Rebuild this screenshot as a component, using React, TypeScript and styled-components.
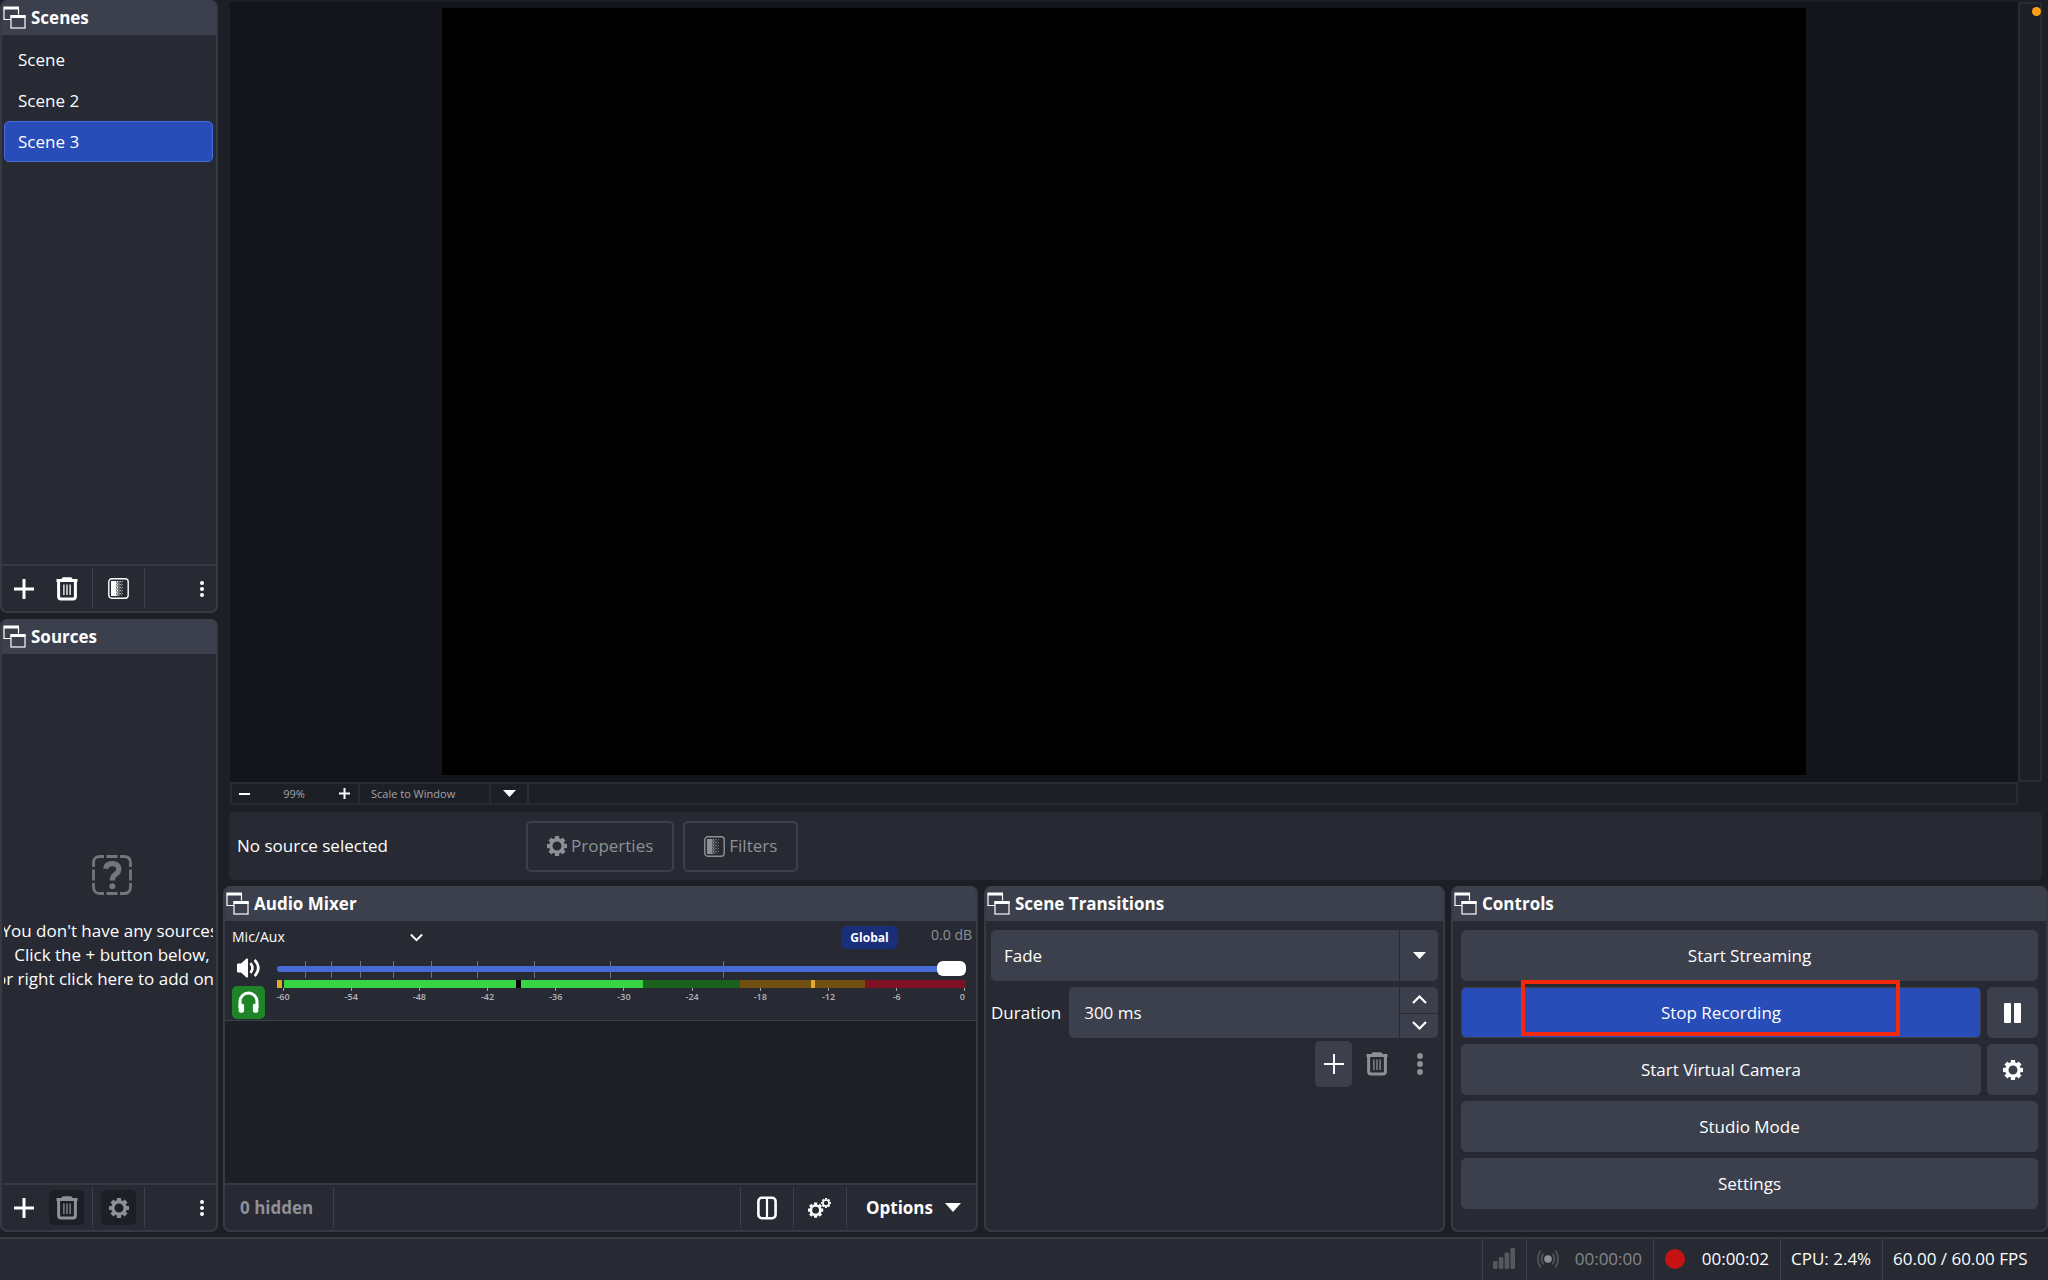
import React, { useState } from "react";
import styled, { createGlobalStyle, css } from "styled-components";

const c = {
  window: "#1d1f26",
  panel: "#272a33",
  raised: "#3c404c",
  line: "#363a45",
  faint: "#282b33",
  preview: "#14141c",
  primary: "#284cb8",
  text: "#fefefe",
  muted: "#8f9095",
};

const Global = createGlobalStyle`
  * { box-sizing: border-box; }
  body { margin: 0; background: ${c.window}; }
  body, button, input, select {
    font-family: "Open Sans", "Noto Sans", sans-serif;
    font-size: 17px;
    line-height: 24px;
    color: ${c.text};
  }
  button { border: 0; padding: 0; background: none; cursor: pointer; }
  svg { display: block; flex: none; }
`;

const Shell = styled.div`
  height: 100vh;
  min-height: 900px;
  display: flex;
  flex-direction: column;
  gap: 5px;
`;
const Workspace = styled.div`
  flex: 1;
  min-height: 0;
  display: grid;
  grid-template-columns: 218px minmax(0, 1fr);
  gap: 5px;
`;
const Side = styled.aside`
  display: grid;
  grid-template-rows: 1fr 1fr;
  gap: 6px;
  min-height: 0;
`;
const Main = styled.main`
  display: flex;
  flex-direction: column;
  min-height: 0;
`;

/* Docks */
const DockBox = styled.section`
  display: flex;
  flex-direction: column;
  min-width: 0;
  min-height: 0;
  border-radius: 7px;
  background: ${c.panel};
  border: 2px solid ${c.line};
  border-top: 0;
  overflow: hidden;
`;
const DockHead = styled.header`
  height: 35px;
  flex: none;
  display: flex;
  align-items: center;
  gap: 5px;
  margin: 0 -2px;
  padding-left: 3px;
  background: ${c.raised};
`;
const DockTitle = styled.h2`
  margin: 0;
  font-size: 17px;
  line-height: 24px;
  font-weight: 700;
`;
const Bar = styled.div`
  height: 47px;
  flex: none;
  display: flex;
  align-items: center;
  gap: 8px;
  padding: 0 3px 0 4px;
  border-top: 2px solid ${c.line};
`;
const Rule = styled.span`
  width: 1px;
  height: 41px;
  background: ${c.raised};
`;
const Spacer = styled.span`
  flex: 1;
`;
const IconButton = styled.button<{ $w?: number; $h?: number; $fill?: string }>`
  width: ${(p) => p.$w ?? 35}px;
  height: ${(p) => p.$h ?? 35}px;
  display: grid;
  place-items: center;
  border-radius: 5px;
  background: ${(p) => p.$fill ?? "transparent"};
  &:disabled { color: ${c.muted}; }
`;

/* Scenes */
const SceneList = styled.ul`
  flex: 1;
  margin: 0;
  padding: 4px 3px 0 2px;
  list-style: none;
`;
const SceneItem = styled.button<{ $on: boolean }>`
  display: block;
  width: 100%;
  height: 41px;
  padding: 0 13px;
  text-align: left;
  border: 1px solid transparent;
  border-radius: 5px;
  ${(p) => p.$on && css`background: ${c.primary}; border-color: #476bd7;`}
`;

/* Sources */
const Empty = styled.div`
  flex: 1;
  margin: 0 3px 0 2px;
  padding: 8px 0 0 7px;
  display: flex;
  flex-direction: column;
  align-items: center;
  justify-content: center;
  overflow: hidden;
  white-space: nowrap;
  text-align: center;
  p { margin: 24px 0 0; }
`;

/* Preview */
const PreviewArea = styled.div`
  flex: 1;
  min-height: 0;
  margin: 0 6px 0 7px;
  padding-top: 2px;
  display: grid;
  grid-template-columns: minmax(0, 1fr) 24px;
`;
const Preview = styled.div`
  min-height: 0;
  padding: 6px 0 7px;
  background: ${c.preview};
  display: flex;
  justify-content: center;
`;
const Canvas = styled.div`
  height: 100%;
  aspect-ratio: 16 / 9;
  background: #000;
`;
const ScrollTrack = styled.div`
  position: relative;
  border: 2px solid ${c.faint};
`;
const Dot = styled.span`
  position: absolute;
  top: 3px;
  right: -1px;
  width: 9px;
  height: 9px;
  border-radius: 50%;
  background: #ff9f12;
`;
const ZoomBar = styled.div`
  height: 23px;
  flex: none;
  margin: 0 30px 7px 7px;
  display: flex;
  align-items: stretch;
  border: 2px solid ${c.faint};
`;
const ZoomGroup = styled.div`
  width: 128px;
  display: flex;
  align-items: center;
  justify-content: space-between;
  border-right: 2px solid ${c.faint};
`;
const SmallText = styled.span`
  font-size: 11px;
  line-height: 18px;
  color: #a3a4a9;
`;
const ScaleBox = styled.label`
  width: 169px;
  position: relative;
  display: flex;
  border-right: 2px solid ${c.faint};
`;
const ScaleSelect = styled.select`
  width: 100%;
  padding: 0 0 0 11px;
  border: 0;
  appearance: none;
  background: transparent;
  font-size: 11px;
  line-height: 18px;
  color: #a3a4a9;
`;
const ScaleArrow = styled.span`
  position: absolute;
  top: 0;
  bottom: 0;
  right: 0;
  width: 38px;
  display: grid;
  place-items: center;
  border-left: 2px solid ${c.faint};
  pointer-events: none;
`;
const SourceBar = styled.div`
  height: 68px;
  flex: none;
  margin: 0 6px 6px;
  padding: 0 8px;
  display: flex;
  align-items: center;
  gap: 9px;
  border-radius: 5px;
  background: ${c.panel};
`;
const SourceName = styled.span`
  width: 280px;
`;
const OutlineButton = styled.button`
  height: 51px;
  padding: 0 19px;
  display: flex;
  align-items: center;
  gap: 4px;
  border: 2px solid ${c.raised};
  border-radius: 5px;
  color: ${c.muted};
`;

const DockRow = styled.div`
  height: 346px;
  flex: none;
  display: grid;
  grid-template-columns: minmax(0, 755fr) minmax(0, 461fr) minmax(0, 597fr);
  gap: 6px;
`;

/* Mixer */
const Channel = styled.div`
  height: 100px;
  flex: none;
  display: grid;
  grid-template-columns: 33px minmax(0, 1fr);
  grid-template-rows: 32px 33px 1fr;
  column-gap: 12px;
  padding: 0 10px 0 7px;
  border-bottom: 1px solid ${c.raised};
`;
const ChannelTop = styled.div`
  grid-column: 1 / -1;
  margin-right: -6px;
  display: flex;
  align-items: center;
`;
const ChannelName = styled.button`
  width: 191px;
  display: flex;
  align-items: center;
  justify-content: space-between;
  font-size: 14px;
  line-height: 20px;
`;
const Badge = styled.span`
  width: 57px;
  height: 23px;
  border-radius: 6px;
  background: #1a2f7a;
  font-size: 12px;
  line-height: 23px;
  font-weight: 700;
  text-align: center;
`;
const Level = styled.span`
  width: 74px;
  padding-bottom: 4px;
  text-align: right;
  font-size: 14px;
  line-height: 20px;
  color: ${c.muted};
`;
const SliderBox = styled.div`
  position: relative;
  align-self: center;
  height: 18px;
`;
const Tick = styled.span`
  position: absolute;
  top: 0;
  width: 1px;
  height: 17px;
  background: #70737c;
`;
const Slider = styled.input`
  position: absolute;
  inset: 0;
  width: 100%;
  height: 17px;
  margin: 0;
  appearance: none;
  background: transparent;
  &::-webkit-slider-runnable-track {
    height: 6px;
    border-radius: 3px;
    background: #476bd7;
  }
  &::-webkit-slider-thumb {
    appearance: none;
    width: 29px;
    height: 15px;
    margin-top: -5px;
    border-radius: 6px;
    background: #fff;
  }
`;
const Meter = styled.div`
  height: 8px;
  margin-top: -6px;
  display: flex;
`;
const Segment = styled.span<{ $n: number; $c: string }>`
  flex: ${(p) => p.$n} 0 0;
  background: ${(p) => p.$c};
`;
const Scale = styled.div`
  display: flex;
  justify-content: space-between;
  margin: 0 1px 0 6px;
`;
const Mark = styled.span`
  width: 0;
  display: flex;
  flex-direction: column;
  align-items: center;
  font-size: 9px;
  line-height: 12px;
  font-weight: 600;
  color: #b4b5ba;
  &::before {
    content: "";
    flex: none;
    width: 1px;
    height: 3px;
    background: #a0a2a8;
  }
  &:last-child { align-items: flex-end; }
`;
const Strip = styled.div`
  flex: 1;
  background: ${c.window};
`;
const MixerBar = styled(Bar)`
  gap: 0;
  padding: 0;
`;
const BarText = styled.button<{ $muted?: boolean }>`
  padding: 0 20px 0 15px;
  display: flex;
  align-items: center;
  gap: 12px;
  font-weight: 700;
  color: ${(p) => (p.$muted ? c.muted : c.text)};
`;
const OptionsButton = styled(BarText)`
  padding: 0 15px 0 19px;
`;

/* Transitions */
const Form = styled.div`
  padding: 9px 5px 0;
  display: flex;
  flex-direction: column;
  gap: 6px;
`;
const Field = styled.div`
  position: relative;
  flex: 1;
  height: 51px;
  display: flex;
  border-radius: 5px;
  background: ${c.raised};
  overflow: hidden;
`;
const FormRow = styled.div`
  display: flex;
  align-items: center;
  gap: 8px;
`;
const FieldSelect = styled.select`
  width: 100%;
  height: 51px;
  padding: 0 13px;
  border: 0;
  appearance: none;
  background: transparent;
`;
const FieldArrow = styled.span`
  position: absolute;
  top: 0;
  bottom: 0;
  right: 0;
  width: 39px;
  display: grid;
  place-items: center;
  border-left: 1px solid ${c.panel};
  pointer-events: none;
`;
const FieldInput = styled.input`
  flex: 1;
  min-width: 0;
  padding: 0 15px;
  border: 0;
  background: transparent;
`;
const Steps = styled.div`
  width: 39px;
  display: grid;
  grid-template-rows: 1fr 1fr;
  border-left: 1px solid ${c.panel};
  button { display: grid; place-items: center; }
  button + button { border-top: 1px solid ${c.panel}; }
`;
const FormTools = styled.div`
  display: flex;
  justify-content: flex-end;
  gap: 6px;
  margin-top: -3px;
`;

/* Controls */
const Controls = styled.div`
  padding: 9px 8px 0;
  display: flex;
  flex-direction: column;
  gap: 6px;
`;
const ControlRow = styled.div`
  display: flex;
  gap: 6px;
`;
const Control = styled.button<{ $on?: boolean; $square?: boolean }>`
  position: relative;
  height: 51px;
  ${(p) => (p.$square ? "width: 51px;" : "flex: 1;")}
  display: grid;
  place-items: center;
  border-radius: 5px;
  border: 1px solid ${c.raised};
  background: ${(p) => (p.$on ? c.primary : c.raised)};
`;
const Highlight = styled.span`
  position: absolute;
  top: -8px;
  left: 59px;
  right: 80px;
  height: 56px;
  border: 4px solid #f3290d;
  pointer-events: none;
`;

/* Status bar */
const Status = styled.footer`
  height: 43px;
  flex: none;
  display: flex;
  justify-content: flex-end;
  border-top: 2px solid ${c.line};
  background: ${c.panel};
`;
const Stat = styled.div<{ $w: number; $muted?: boolean }>`
  width: ${(p) => p.$w}px;
  padding: 0 11px 2px 10px;
  display: flex;
  align-items: center;
  justify-content: space-between;
  border-left: 1px solid ${c.raised};
  color: ${(p) => (p.$muted ? "#84868b" : c.text)};
  white-space: nowrap;
`;

/* Icons */
const WindowsIcon = () => (
  <svg width="23" height="23" viewBox="0 0 23 23" fill="none" stroke="currentColor">
    <path d="M8 13.5H1V3M15.5 3V8.5" strokeWidth="1.2" />
    <path d="M0.4 2H16" strokeWidth="3" />
    <rect x="8" y="10" width="14" height="12" strokeWidth="1.2" />
    <path d="M7.4 10.5H22.6" strokeWidth="3" />
  </svg>
);
const PlusIcon = ({ size = 20, w = 3 }: { size?: number; w?: number }) => (
  <svg width={size} height={size} viewBox={`0 0 ${size} ${size}`} stroke="currentColor" strokeWidth={w}>
    <path d={`M0 ${size / 2}H${size}M${size / 2} 0V${size}`} />
  </svg>
);
const TrashIcon = () => (
  <svg width="22" height="24" viewBox="0 0 22 24" fill="none" stroke="currentColor">
    <path d="M0.5 3.5H21.5" strokeWidth="3" />
    <path d="M6 2.5L7.2 1H14.8L16 2.5" strokeWidth="1.6" fill="currentColor" />
    <path d="M2.6 5V19.5Q2.6 22 5.1 22H16.9Q19.4 22 19.4 19.5V5" strokeWidth="3" />
    <path d="M7.9 7.5V18M11 7.5V18M14.1 7.5V18" strokeWidth="1.3" />
  </svg>
);
const FilterIcon = () => (
  <svg width="21" height="21" viewBox="0 0 21 21" fill="currentColor">
    <rect x="0.8" y="0.8" width="19.4" height="19.4" rx="3" fill="none" stroke="currentColor" strokeWidth="1.4" />
    <rect x="3" y="3" width="5" height="15" />
    {Array.from({ length: 10 }, (_, r) => (
      <g key={r}>
        <rect x={r % 2 ? 8 : 8.7} y={3 + r * 1.5} width="1.6" height="1.3" />
        <rect x={r % 2 ? 10.4 : 11.6} y={3 + r * 1.5} width="1.1" height="1.1" />
        <rect x={r % 2 ? 13 : 14} y={3 + r * 1.5} width="0.7" height="0.8" />
      </g>
    ))}
  </svg>
);
const Cog = ({ r }: { r: number }) => (
  <g fill="none" stroke="currentColor">
    <circle r={r * 0.62} strokeWidth={r * 0.34} />
    {Array.from({ length: 8 }, (_, i) => (
      <path key={i} d={`M0 ${-r * 0.72}V${-r}`} strokeWidth={r * 0.42} transform={`rotate(${i * 45})`} />
    ))}
  </g>
);
const GearIcon = () => (
  <svg width="20" height="20" viewBox="-10 -10 20 20"><Cog r={10} /></svg>
);
const GearsIcon = () => (
  <svg width="23" height="20" viewBox="0 0 23 20">
    <g transform="translate(7.6 12.2)"><Cog r={7.6} /></g>
    <g transform="translate(18 5)"><Cog r={4.9} /></g>
  </svg>
);
const DotsIcon = ({ r = 2, gap = 6 }: { r?: number; gap?: number }) => (
  <svg width="6" height="24" viewBox="0 0 6 24" fill="currentColor">
    {[-1, 0, 1].map((k) => <circle key={k} cx="3" cy={12 + k * gap} r={r} />)}
  </svg>
);
const Triangle = ({ w, h }: { w: number; h: number }) => (
  <svg width={w} height={h} viewBox={`0 0 ${w} ${h}`} fill="currentColor">
    <path d={`M0 0H${w}L${w / 2} ${h}Z`} />
  </svg>
);
const Chevron = ({ up, w = 15 }: { up?: boolean; w?: number }) => (
  <svg width={w} height="9" viewBox="0 0 15 9" fill="none" stroke="currentColor" strokeWidth="2.2">
    <path d={up ? "M1 8L7.5 1.5L14 8" : "M1 1L7.5 7.5L14 1"} />
  </svg>
);
const SpeakerIcon = () => (
  <svg width="24" height="20" viewBox="0 0 24 20" fill="currentColor">
    <path d="M0 6.5Q0 5.5 1 5.5H4L9.5 0.6Q11 0 11 1.4V18.6Q11 20 9.5 19.4L4 14.5H1Q0 14.5 0 13.5Z" />
    <path d="M13.4 5.2Q17.6 10 13.4 14.8M17.6 2Q25 10 17.6 18" fill="none" stroke="currentColor" strokeWidth="2.6" />
  </svg>
);
const HeadphonesIcon = () => (
  <svg width="21" height="23" viewBox="0 0 21 23" fill="none" stroke="currentColor">
    <path d="M2 17V10.5A8.5 8.5 0 0 1 19 10.5V17" strokeWidth="3" />
    <rect x="1.2" y="13.2" width="4.4" height="8" rx="1" fill="currentColor" />
    <rect x="15.4" y="13.2" width="4.4" height="8" rx="1" fill="currentColor" />
  </svg>
);
const ColumnsIcon = () => (
  <svg width="20" height="24" viewBox="0 0 20 24" fill="none" stroke="currentColor" strokeWidth="2.6">
    <rect x="1.4" y="1.8" width="17.2" height="20.4" rx="3.4" />
    <path d="M10 2V22" strokeWidth="2.2" />
  </svg>
);
const QuestionIcon = () => (
  <svg width="40" height="40" viewBox="0 0 40 40" fill="none" stroke="#74767c">
    <path
      d="M1.5 12V8Q1.5 1.5 8 1.5H12M28 1.5H32Q38.5 1.5 38.5 8V12M38.5 28V32Q38.5 38.5 32 38.5H28M12 38.5H8Q1.5 38.5 1.5 32V28M14.5 1.5H25.5M14.5 38.5H25.5M1.5 14.5V25.5M38.5 14.5V25.5"
      strokeWidth="2.8"
    />
    <path d="M13.6 13.8Q14.2 8.6 20.2 8.6Q26.8 8.6 26.8 14Q26.8 17.2 23.6 19.2Q20.4 21.4 20.4 25.4" strokeWidth="5.2" />
    <circle cx="20.4" cy="31.3" r="3" fill="#74767c" stroke="none" />
  </svg>
);
const SignalIcon = () => (
  <svg width="22" height="21" viewBox="0 0 22 21" fill="#55585f">
    <rect x="0" y="13" width="4.6" height="8" rx="1.4" />
    <rect x="5.8" y="9" width="4.6" height="12" rx="1.4" />
    <rect x="11.6" y="4.6" width="4.6" height="16.4" rx="1.4" />
    <rect x="17.4" y="0" width="4.6" height="21" rx="1.4" />
  </svg>
);
const BroadcastIcon = () => (
  <svg width="22" height="20" viewBox="0 0 22 20" fill="none" stroke="#55585f" strokeWidth="1.6">
    <circle cx="11" cy="10" r="3.8" fill="#8d8f94" stroke="none" />
    <path d="M6.4 4.6Q2.8 10 6.4 15.4M15.6 4.6Q19.2 10 15.6 15.4M3.6 1.4Q-1.8 10 3.6 18.6M18.4 1.4Q23.8 10 18.4 18.6" />
  </svg>
);

const Dock = ({ title, children }: { title: string; children: React.ReactNode }) => (
  <DockBox>
    <DockHead>
      <WindowsIcon />
      <DockTitle>{title}</DockTitle>
    </DockHead>
    {children}
  </DockBox>
);

const scenes = ["Scene", "Scene 2", "Scene 3"];
const sliderTicks = [4.1, 7.8, 12.1, 16.8, 22.4, 29, 37.3, 48.3, 64.8];
const meter: [number, string][] = [
  [5, "#e0a92c"], [2, "#272a33"], [232, "#38d443"], [5, "#000000"], [122, "#38d443"],
  [97, "#1a611f"], [71, "#70510f"], [4, "#e3ab2c"], [50, "#70510f"], [101, "#7c1122"],
];
const marks = [-60, -54, -48, -42, -36, -30, -24, -18, -12, -6, 0];

export default function App() {
  const [scene, setScene] = useState("Scene 3");
  return (
    <>
      <Global />
      <Shell>
        <Workspace>
          <Side>
            <Dock title="Scenes">
              <SceneList>
                {scenes.map((s) => (
                  <li key={s}>
                    <SceneItem $on={s === scene} onClick={() => setScene(s)}>{s}</SceneItem>
                  </li>
                ))}
              </SceneList>
              <Bar>
                <IconButton aria-label="Add scene"><PlusIcon /></IconButton>
                <IconButton aria-label="Remove scene"><TrashIcon /></IconButton>
                <Rule />
                <IconButton aria-label="Scene filters"><FilterIcon /></IconButton>
                <Rule />
                <Spacer />
                <IconButton $w={22} aria-label="More scene actions"><DotsIcon /></IconButton>
              </Bar>
            </Dock>
            <Dock title="Sources">
              <Empty>
                <QuestionIcon />
                <p>
                  You don't have any sources.<br />
                  Click the + button below,<br />
                  or right click here to add one.
                </p>
              </Empty>
              <Bar>
                <IconButton aria-label="Add source"><PlusIcon /></IconButton>
                <IconButton $fill={c.window} disabled aria-label="Remove source"><TrashIcon /></IconButton>
                <Rule />
                <IconButton $fill={c.window} disabled aria-label="Source properties"><GearIcon /></IconButton>
                <Rule />
                <Spacer />
                <IconButton $w={22} aria-label="More source actions"><DotsIcon /></IconButton>
              </Bar>
            </Dock>
          </Side>

          <Main>
            <PreviewArea>
              <Preview><Canvas /></Preview>
              <ScrollTrack><Dot /></ScrollTrack>
            </PreviewArea>
            <ZoomBar>
              <ZoomGroup>
                <IconButton $w={25} $h={19} aria-label="Zoom out">
                  <svg width="11" height="2" viewBox="0 0 11 2" fill="currentColor"><rect width="11" height="2" /></svg>
                </IconButton>
                <SmallText>99%</SmallText>
                <IconButton $w={27} $h={19} aria-label="Zoom in"><PlusIcon size={11} w={2} /></IconButton>
              </ZoomGroup>
              <ScaleBox>
                <ScaleSelect aria-label="Preview scaling"><option>Scale to Window</option></ScaleSelect>
                <ScaleArrow><Triangle w={13} h={7} /></ScaleArrow>
              </ScaleBox>
            </ZoomBar>

            <SourceBar>
              <SourceName>No source selected</SourceName>
              <OutlineButton disabled><GearIcon />Properties</OutlineButton>
              <OutlineButton disabled><FilterIcon />Filters</OutlineButton>
            </SourceBar>

            <DockRow>
              <Dock title="Audio Mixer">
                <Channel>
                  <ChannelTop>
                    <ChannelName>Mic/Aux<Chevron w={13} /></ChannelName>
                    <Spacer />
                    <Badge>Global</Badge>
                    <Level>0.0 dB</Level>
                  </ChannelTop>
                  <IconButton $w={33} $h={30} aria-label="Mute"><SpeakerIcon /></IconButton>
                  <SliderBox>
                    {sliderTicks.map((t) => <Tick key={t} style={{ left: `${t}%` }} />)}
                    <Slider type="range" min={0} max={100} defaultValue={100} aria-label="Mic/Aux volume" />
                  </SliderBox>
                  <IconButton $w={33} $h={33} $fill="#1f8428" aria-label="Monitor audio"><HeadphonesIcon /></IconButton>
                  <div>
                    <Meter>{meter.map(([n, col], i) => <Segment key={i} $n={n} $c={col} />)}</Meter>
                    <Scale>{marks.map((m) => <Mark key={m}>{m}</Mark>)}</Scale>
                  </div>
                </Channel>
                <Strip />
                <MixerBar>
                  <BarText $muted>0 hidden</BarText>
                  <Rule />
                  <Spacer />
                  <Rule />
                  <IconButton $w={52} aria-label="Mixer layout"><ColumnsIcon /></IconButton>
                  <Rule />
                  <IconButton $w={52} aria-label="Advanced audio properties"><GearsIcon /></IconButton>
                  <Rule />
                  <OptionsButton>Options<Triangle w={16} h={9} /></OptionsButton>
                </MixerBar>
              </Dock>

              <Dock title="Scene Transitions">
                <Form>
                  <FormRow>
                    <Field>
                      <FieldSelect aria-label="Transition"><option>Fade</option></FieldSelect>
                      <FieldArrow><Triangle w={13} h={7} /></FieldArrow>
                    </Field>
                  </FormRow>
                  <FormRow>
                    <label htmlFor="duration">Duration</label>
                    <Field>
                      <FieldInput id="duration" defaultValue="300 ms" />
                      <Steps>
                        <button aria-label="Increase duration"><Chevron up /></button>
                        <button aria-label="Decrease duration"><Chevron /></button>
                      </Steps>
                    </Field>
                  </FormRow>
                  <FormTools>
                    <IconButton $w={37} $h={46} $fill={c.raised} aria-label="Add transition"><PlusIcon w={2} /></IconButton>
                    <IconButton $w={37} $h={46} disabled aria-label="Remove transition"><TrashIcon /></IconButton>
                    <IconButton $w={37} $h={46} disabled aria-label="Transition options"><DotsIcon r={2.9} gap={8} /></IconButton>
                  </FormTools>
                </Form>
              </Dock>

              <Dock title="Controls">
                <Controls>
                  <ControlRow><Control>Start Streaming</Control></ControlRow>
                  <ControlRow>
                    <Control $on>Stop Recording<Highlight /></Control>
                    <Control $square aria-label="Pause recording">
                      <svg width="17" height="20" viewBox="0 0 17 20" fill="currentColor">
                        <rect width="7" height="20" rx="1" /><rect x="10" width="7" height="20" rx="1" />
                      </svg>
                    </Control>
                  </ControlRow>
                  <ControlRow>
                    <Control>Start Virtual Camera</Control>
                    <Control $square aria-label="Virtual camera settings"><GearIcon /></Control>
                  </ControlRow>
                  <ControlRow><Control>Studio Mode</Control></ControlRow>
                  <ControlRow><Control>Settings</Control></ControlRow>
                </Controls>
              </Dock>
            </DockRow>
          </Main>
        </Workspace>

        <Status>
          <Stat $w={44}><SignalIcon /></Stat>
          <Stat $w={127} $muted><BroadcastIcon />00:00:00</Stat>
          <Stat $w={127}>
            <svg width="22" height="20" viewBox="0 0 22 20"><circle cx="11" cy="10" r="10" fill="#c51212" /></svg>
            00:00:02
          </Stat>
          <Stat $w={102}>CPU: 2.4%</Stat>
          <Stat $w={166}>60.00 / 60.00 FPS</Stat>
        </Status>
      </Shell>
    </>
  );
}
